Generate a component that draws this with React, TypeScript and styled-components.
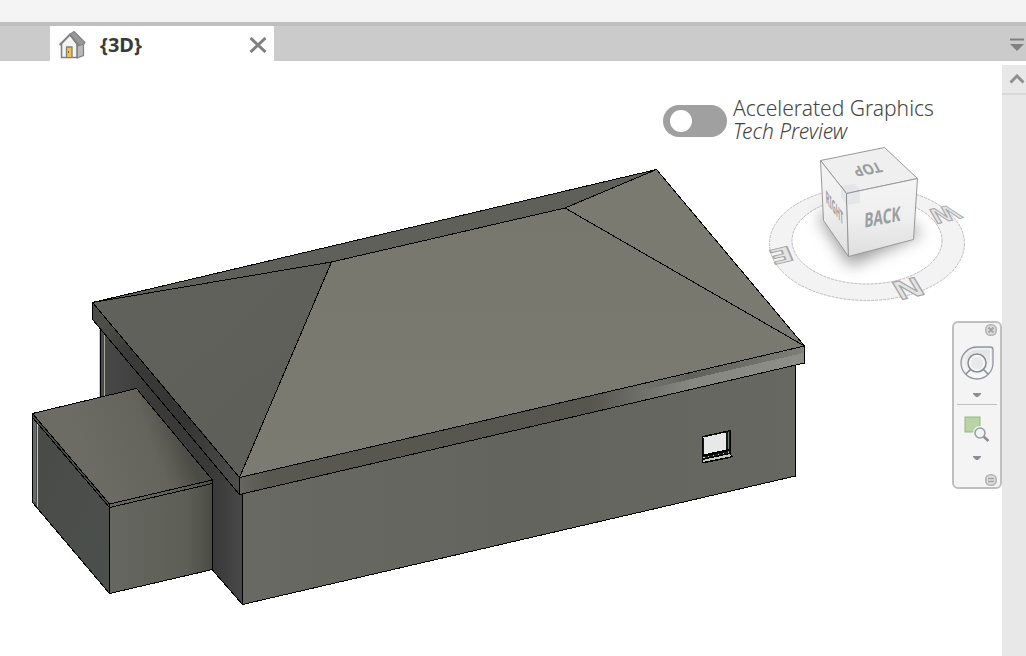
import React, { useState } from "react";
import styled, { createGlobalStyle } from "styled-components";

const GlobalStyle = createGlobalStyle`
  *, *::before, *::after { box-sizing: border-box; }
  body {
    margin: 0;
    background: #ffffff;
    font-family: "Noto Sans", "Open Sans", sans-serif;
    color: #333333;
  }
  button {
    padding: 0;
    border: 0;
    background: none;
    font: inherit;
    color: inherit;
    cursor: pointer;
  }
  svg { display: block; }
`;

const Page = styled.div`
  display: flex;
  flex-direction: column;
  min-height: 100vh;
`;

const RibbonEdge = styled.header`
  height: 26px;
  background: #f4f4f4;
  border-bottom: 4px solid #bfbfbf;
`;

const TabBar = styled.nav`
  display: flex;
  justify-content: space-between;
  height: 35px;
  padding: 2px 2px 0 50px;
  background: #cbcbcb;
`;

const Tab = styled.div`
  display: flex;
  align-items: center;
  justify-content: space-between;
  width: 224px;
  margin-top: -2px;
  padding: 2px 7px 0 8px;
  background: #ffffff;
`;

const TabTitle = styled.button`
  display: flex;
  align-items: center;
  gap: 14px;
  font-size: 20px;
  line-height: 24px;
  font-weight: 700;
  color: #3a3a3a;
`;

const IconButton = styled.button`
  display: flex;
  align-items: center;
  justify-content: center;
`;

const Workspace = styled.main`
  display: flex;
  flex: 1;
`;

const Canvas = styled.section`
  position: relative;
  flex: 1;
  min-width: 0;
  overflow: hidden;
`;

const ScrollTrack = styled.aside`
  flex: none;
  width: 24px;
  margin-top: 4px;
  background: #e8e8e8;
`;

const ScrollUp = styled(IconButton)`
  width: 100%;
  height: 30px;
  padding-left: 6px;
  border-bottom: 2px solid #d9d9d9;
`;

const Overlay = styled.div`
  position: absolute;
  top: 36px;
  right: 0;
  display: flex;
  flex-direction: column;
  align-items: flex-end;
`;

const GraphicsOption = styled.label`
  display: flex;
  align-items: center;
  gap: 6px;
  width: 269px;
  height: 48px;
  margin-right: 70px;
  white-space: nowrap;
  font-size: 21px;
  line-height: 23px;
  font-weight: 300;
  color: #444444;
`;

const Switch = styled.input`
  appearance: none;
  display: flex;
  align-items: center;
  flex: none;
  width: 64px;
  height: 32px;
  margin: 0;
  padding: 0 7px;
  border-radius: 16px;
  background: #a0a0a0;
  cursor: pointer;

  &::before {
    content: "";
    width: 22px;
    height: 22px;
    border-radius: 50%;
    background: #ffffff;
  }
  &:checked { justify-content: flex-end; background: #3a87c8; }
`;

const OptionText = styled.span`
  display: flex;
  flex-direction: column;
  padding-bottom: 2px;
`;

const CubeArea = styled.div`
  margin-right: 32px;
`;

const NavigationBar = styled.div`
  display: flex;
  flex-direction: column;
  align-items: center;
  width: 50px;
  height: 168px;
  margin: 16px 0 0;
  padding: 1px 3px;
  border: 2px solid #bfbfbf;
  border-radius: 6px;
  background: #f4f4f4;
`;

const NavCorner = styled(IconButton)`
  align-self: flex-end;
  height: 12px;
`;

const NavTool = styled(IconButton)<{ $height: number }>`
  width: 100%;
  height: ${(p) => p.$height}px;
`;

const NavArrow = styled(IconButton)`
  width: 100%;
  height: 10px;
`;

const NavDivider = styled.hr`
  width: 40px;
  margin: 4px 0 0;
  border: 0;
  border-top: 1px solid #bfbfbf;
`;

const NavSpacer = styled.span`
  flex: 1;
`;

const HomeIcon = () => (
  <svg width="28" height="30" viewBox="58 29 28 30" aria-hidden="true">
    <path d="M77 41 83.500 43v11.500L77 57z" fill="#b9b9b9" stroke="#808080" strokeWidth="1.200" />
    <path d="M61.500 42.500 70 33.500l7 9.500v13.500H61.500z" fill="#f3f3f3" stroke="#808080" strokeWidth="1.600" />
    <path d="M69.500 33.500 74 30.500 85 41.500l-1 1.500-5 1.500z" fill="#989898" stroke="#858585" strokeWidth="1.200" strokeLinejoin="round" />
    <path d="M59.500 44 70 33.500 79 45" fill="none" stroke="#808080" strokeWidth="1.800" />
    <path d="M66.500 56v-10h5.500v10" fill="#f2c24f" stroke="#808080" strokeWidth="1.300" />
    <path d="M68.500 50v2" stroke="#7a6a40" strokeWidth="1" />
  </svg>
);

const CloseIcon = () => (
  <svg width="18" height="16" viewBox="0 0 18 16" aria-hidden="true">
    <path d="M1.500 1 16.500 15M16.500 1 1.500 15" stroke="#808080" strokeWidth="3" />
  </svg>
);

const MenuIcon = () => (
  <svg width="14" height="14" viewBox="0 0 14 14" aria-hidden="true">
    <path d="M0 1.500h14" stroke="#808080" strokeWidth="2" />
    <path d="M0 6h14L7 13z" fill="#808080" />
  </svg>
);

const ChevronUp = () => (
  <svg width="16" height="10" viewBox="0 0 16 10" aria-hidden="true">
    <path d="M1.500 8.500 8 2l6.500 6.500" fill="none" stroke="#8f8f8f" strokeWidth="3" />
  </svg>
);

const SmallArrow = () => (
  <svg width="8" height="6" viewBox="0 0 8 6" aria-hidden="true">
    <path d="M0 1h8v1L5 5H3L0 2z" fill="#8b8e94" />
  </svg>
);

const CornerIcon = ({ kind }: { kind: "close" | "options" }) => (
  <svg width="12" height="12" viewBox="0 0 12 12" aria-hidden="true">
    <rect x=".8" y=".8" width="10.400" height="10.400" rx="4.500" fill="#dcdcdc" stroke="#b4b4b4" strokeWidth="1.600" />
    {kind === "close" ? (
      <path d="M3.500 3.500 8.500 8.500M8.500 3.500 3.500 8.500" stroke="#a4a4a4" strokeWidth="2" />
    ) : (
      <path d="M3 4.500h6M3 7.500h6" stroke="#a4a4a4" strokeWidth="1.600" />
    )}
  </svg>
);

const WheelIcon = () => (
  <svg width="34" height="34" viewBox="0 0 34 34" aria-hidden="true">
    <defs>
      <linearGradient id="wheel" x1="0" y1="0" x2="0" y2="1">
        <stop offset="0" stopColor="#dfe2e6" />
        <stop offset="1" stopColor="#f8f8f8" />
      </linearGradient>
    </defs>
    <path d="M17 1h13.500q2.500 0 2.500 2.500V17a16 16 0 1 1-16-16z" fill="url(#wheel)" stroke="#92969c" strokeWidth="1.300" />
    <path d="M17 3h13.500V17A13.500 13.500 0 1 1 17 3z" fill="none" stroke="#fafafa" strokeWidth="1" />
    <circle cx="17" cy="17" r="9" fill="#f0f1f2" stroke="#888c92" strokeWidth="1.500" />
    <circle cx="17" cy="17" r="7" fill="#e7e9eb" stroke="#fff" strokeWidth="1" />
    <path d="M10.500 23.500 6 28M23.500 23.500 28 28" stroke="#888c92" strokeWidth="1.500" />
  </svg>
);

const ZoomRegionIcon = () => (
  <svg width="26" height="26" viewBox="0 0 26 26" aria-hidden="true">
    <rect x="1" y="1" width="15" height="15" fill="#b9d3a5" stroke="#91bb82" />
    <circle cx="16" cy="17" r="7" fill="#f4f4f4" />
    <path d="m19 20 5.500 5" stroke="#8b8e91" strokeWidth="2.600" />
    <circle cx="16" cy="17" r="5" fill="#eef3f4" stroke="#9b9fa2" strokeWidth="1.600" />
  </svg>
);

const HouseModel = () => (
  <svg width="820" height="559" viewBox="0 61 820 559" role="img" aria-label="House with hip roof">
    <defs>
      <linearGradient id="frontRoof" x1="0" y1="0" x2="0" y2="1">
        <stop offset="0" stopColor="#77776e" />
        <stop offset="1" stopColor="#7b7b71" />
      </linearGradient>
      <linearGradient id="sideRoof" x1="0" y1="0" x2="1" y2="1">
        <stop offset="0" stopColor="#61625b" />
        <stop offset="1" stopColor="#5d5e57" />
      </linearGradient>
      <linearGradient id="leftFascia" gradientUnits="userSpaceOnUse" x1="92" y1="305" x2="240" y2="480">
        <stop offset="0" stopColor="#4a4b48" />
        <stop offset=".1" stopColor="#4e4f48" />
        <stop offset=".25" stopColor="#3b3b39" />
        <stop offset=".65" stopColor="#343432" />
        <stop offset="1" stopColor="#4d4e4b" />
      </linearGradient>
      <linearGradient id="frontFascia" gradientUnits="userSpaceOnUse" x1="240" y1="0" x2="804" y2="0">
        <stop offset="0" stopColor="#65665f" />
        <stop offset=".05" stopColor="#58584f" />
        <stop offset=".62" stopColor="#56564f" />
        <stop offset=".72" stopColor="#71726b" />
        <stop offset=".8" stopColor="#868780" />
        <stop offset="1" stopColor="#8d8e87" />
      </linearGradient>
      <linearGradient id="fasciaShade" gradientUnits="userSpaceOnUse" x1="640" y1="0" x2="804" y2="0">
        <stop offset="0" stopColor="#5b5c55" stopOpacity="0" />
        <stop offset=".3" stopColor="#5b5c55" stopOpacity=".9" />
        <stop offset="1" stopColor="#5b5c55" stopOpacity=".3" />
      </linearGradient>
      <linearGradient id="sideWall" gradientUnits="userSpaceOnUse" x1="100" y1="0" x2="243" y2="0">
        <stop offset="0" stopColor="#494949" />
        <stop offset=".2" stopColor="#424242" />
        <stop offset=".35" stopColor="#3a3a39" />
        <stop offset=".75" stopColor="#393938" />
        <stop offset=".87" stopColor="#3e3e3e" />
        <stop offset="1" stopColor="#4a4a4a" />
      </linearGradient>
      <linearGradient id="annexTop" gradientUnits="userSpaceOnUse" x1="85" y1="460" x2="178" y2="425">
        <stop offset="0" stopColor="#6d6c64" />
        <stop offset=".7" stopColor="#65645c" />
        <stop offset="1" stopColor="#4b4b45" />
      </linearGradient>
      <linearGradient id="annexFront" x1="0" y1="0" x2="1" y2="0">
        <stop offset="0" stopColor="#666760" />
        <stop offset=".75" stopColor="#5d5e56" />
        <stop offset="1" stopColor="#4a4b43" />
      </linearGradient>
      <linearGradient id="annexSide" x1="0" y1="0" x2="1" y2="1">
        <stop offset="0" stopColor="#484a47" />
        <stop offset="1" stopColor="#4c504d" />
      </linearGradient>
      <linearGradient id="frontWall" x1="0" y1="0" x2="1" y2="0">
        <stop offset="0" stopColor="#686962" />
        <stop offset=".5" stopColor="#63645d" />
        <stop offset="1" stopColor="#676861" />
      </linearGradient>
    </defs>
    <g stroke="#000" strokeWidth="1" shapeRendering="crispEdges">
      <path d="M100.500 329 242.500 485v119.500l-30-34.500L100.500 440z" fill="url(#sideWall)" />
      <path d="M102.500 333v64" stroke="#464b4e" strokeWidth="3" />
      <path d="M104.500 335v62" stroke="#a9a994" />
      <path d="M99.500 330v68" stroke="#c9cccb" />
      <path d="M242.500 493 795.500 365v111L242.500 604.500z" fill="url(#frontWall)" />
      <path d="M92.500 302.500v17L239.500 494.500v-17z" fill="url(#leftFascia)" />
      <path d="M239.500 477.500v17L804.500 363v-17z" fill="url(#frontFascia)" />
      <path d="M640 385 803 347v6L640 391z" fill="url(#fasciaShade)" stroke="none" />
      <path d="M92.500 302.500 656.500 169.500 565 208 331.500 262z" fill="#5f6059" />
      <path d="M92.500 302.500 331.500 262 239.500 477.500z" fill="url(#sideRoof)" />
      <path d="M331.500 262 565 208 804.500 346 239.500 477.500z" fill="url(#frontRoof)" />
      <path d="M565 208 656.500 169.500 804.500 346z" fill="#7a7a71" />
      <path d="M32.500 413.500 109.500 504v89.500L32.500 502.500z" fill="url(#annexSide)" />
      <path d="M34.500 419v83" stroke="#65696a" strokeWidth="3" />
      <path d="M32.500 413v90" />
      <path d="M37.500 423v84" stroke="#c0c4b8" />
      <path d="M109.500 504 212.500 480v89.500L109.500 593.500z" fill="url(#annexFront)" />
      <path d="M32.500 413.500 136.500 388.500 212.500 480 109.500 504z" fill="url(#annexTop)" />
      <path d="M32.500 417.500 109.500 507.500 212.500 483.500" fill="none" />
      <path d="M702.500 436.500 730.500 430.500v27L702.500 463z" fill="#161817" />
      <path d="M703.500 437.500 725.500 432.500v18.500L703.500 455z" fill="#e7e9e8" stroke="none" />
      <path d="M728.500 432v24" stroke="#747b75" />
      <path d="M703.500 457.500 729 452" stroke="#d2d4d0" strokeDasharray="1 4" fill="none" />
      <path d="M702.500 459.500 730 453.500l2.500 3L702.500 462.500z" fill="#c9cab5" />
      <path d="M703 455.500 729 450" strokeWidth="2" fill="none" />
    </g>
  </svg>
);

const CubeText = styled.text`
  font-weight: 700;
  font-size: 18px;
  text-anchor: middle;
  fill: #9b9ea1;
`;

const CompassText = styled.text`
  font-weight: 700;
  font-size: 24px;
  text-anchor: middle;
  fill: #e4e4e4;
  stroke: #a6a6a6;
  stroke-width: 1;
`;

const CubeDrawing = styled.svg`
  overflow: visible;
`;

const ViewCube = () => (
  <CubeDrawing width="205" height="160" viewBox="765 145 205 160" role="group" aria-label="View cube">
    <defs>
      <linearGradient id="cubeFront" x1="0" y1="0" x2="0" y2="1">
        <stop offset="0" stopColor="#f4f4f4" />
        <stop offset=".5" stopColor="#efefef" />
        <stop offset="1" stopColor="#dedede" />
      </linearGradient>
      <filter id="cubeShadow" x="-40%" y="-60%" width="180%" height="220%">
        <feGaussianBlur stdDeviation="8" />
      </filter>
    </defs>
    <g stroke="#bcbcbc" strokeDasharray="3 1">
      <ellipse cx="867" cy="243.500" rx="97.500" ry="57" fill="#f3f3f3" />
      <ellipse cx="867" cy="240.500" rx="75" ry="43.500" fill="#fff" />
    </g>
    <path d="M818 215 875 205 923 233 850 266z" fill="#777" opacity=".75" filter="url(#cubeShadow)" />
    <g stroke="#999" strokeWidth="1" strokeLinejoin="round">
      <path d="M820.500 160.500 884.500 147.500 917.500 178.500 846.500 193.500z" fill="#efefef" />
      <path d="M820.500 160.500 846.500 193.500 848.500 256.500 823.500 220.500z" fill="url(#cubeFront)" />
      <path d="M846.500 193.500 917.500 178.500 913.500 239.500 848.500 256.500z" fill="url(#cubeFront)" />
    </g>
    <path d="M841 186 855 184 860 190v13l-13 2-6-8z" fill="#dfe2e7" opacity=".75" />
    <path d="M841 186 846.500 193.500 860 190.500M846.500 193.500v12" fill="none" stroke="#8e9093" />
    <CubeText transform="matrix(-.76 .14 -.4 -.75 867.500 169)" y="6">TOP</CubeText>
    <CubeText transform="matrix(.31 .42 .04 1 834.500 208)" y="6">RIGHT</CubeText>
    <CubeText transform="matrix(.76 -.15 -.03 1.120 882.500 217.500)" y="6">BACK</CubeText>
    <CompassText transform="matrix(-1.700 .4 -.35 -.82 782 255.500)" y="9">E</CompassText>
    <CompassText transform="matrix(1.400 -.33 .6 1 908 288)" y="9">N</CompassText>
    <CompassText transform="matrix(-1.100 .26 -.75 -.75 944.500 214.500)" y="9">W</CompassText>
  </CubeDrawing>
);

export default function App() {
  const [accelerated, setAccelerated] = useState(false);
  return (
    <Page>
      <GlobalStyle />
      <RibbonEdge />
      <TabBar aria-label="Open views">
        <Tab>
          <TabTitle type="button" aria-current="page">
            <HomeIcon />
            {"{3D}"}
          </TabTitle>
          <IconButton type="button" aria-label="Close view">
            <CloseIcon />
          </IconButton>
        </Tab>
        <IconButton type="button" aria-label="List views">
          <MenuIcon />
        </IconButton>
      </TabBar>
      <Workspace>
        <Canvas aria-label="3D view">
          <HouseModel />
          <Overlay>
            <GraphicsOption>
              <Switch
                type="checkbox"
                role="switch"
                checked={accelerated}
                onChange={(e) => setAccelerated(e.target.checked)}
              />
              <OptionText>
                Accelerated Graphics
                <em>Tech Preview</em>
              </OptionText>
            </GraphicsOption>
            <CubeArea>
              <ViewCube />
            </CubeArea>
            <NavigationBar role="toolbar" aria-label="Navigation bar">
              <NavCorner type="button" aria-label="Close navigation bar">
                <CornerIcon kind="close" />
              </NavCorner>
              <NavTool type="button" aria-label="Steering wheel" $height={54}>
                <WheelIcon />
              </NavTool>
              <NavArrow type="button" aria-label="Steering wheel options">
                <SmallArrow />
              </NavArrow>
              <NavDivider />
              <NavTool type="button" aria-label="Zoom in region" $height={48}>
                <ZoomRegionIcon />
              </NavTool>
              <NavArrow type="button" aria-label="Zoom options">
                <SmallArrow />
              </NavArrow>
              <NavSpacer />
              <NavCorner type="button" aria-label="Customize navigation bar">
                <CornerIcon kind="options" />
              </NavCorner>
            </NavigationBar>
          </Overlay>
        </Canvas>
        <ScrollTrack aria-label="Scroll bar">
          <ScrollUp type="button" aria-label="Scroll up">
            <ChevronUp />
          </ScrollUp>
        </ScrollTrack>
      </Workspace>
    </Page>
  );
}
